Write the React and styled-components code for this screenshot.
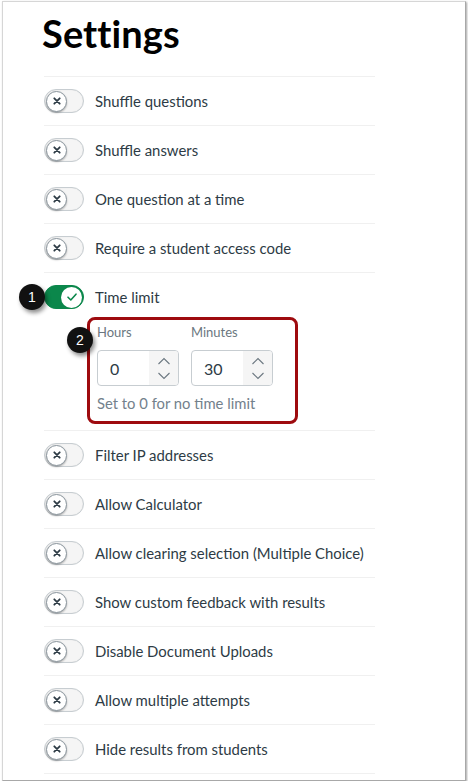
import React from 'react';
import styled, {createGlobalStyle} from 'styled-components';

const Global = createGlobalStyle`
    body{
        margin:0;
        background:#fff;
        font-family:'Lato','Liberation Sans',sans-serif;
    }
`;

const settings = [
    {label:'Shuffle questions'},
    {label:'Shuffle answers'},
    {label:'One question at a time'},
    {label:'Require a student access code'},
    {label:'Time limit', on:true, timer:true},
    {label:'Filter IP addresses'},
    {label:'Allow Calculator'},
    {label:'Allow clearing selection (Multiple Choice)'},
    {label:'Show custom feedback with results'},
    {label:'Disable Document Uploads'},
    {label:'Allow multiple attempts'},
    {label:'Hide results from students'},
];

const Toggle = ({on}) => (
    <Track on={on ? 1 : 0}>
        <Knob on={on ? 1 : 0}>
            {on ? (
                <svg width="12" height="12" viewBox="0 0 12 12">
                    <path d="M2 6.2 L4.8 9 L10 3.2" fill="none" stroke="#0b874b" strokeWidth="1.6" strokeLinecap="round" strokeLinejoin="round"/>
                </svg>
            ) : (
                <svg width="10" height="10" viewBox="0 0 10 10">
                    <path d="M2.3 2.3 L7.7 7.7 M7.7 2.3 L2.3 7.7" stroke="#2d3b45" strokeWidth="1.8" strokeLinecap="round"/>
                </svg>
            )}
        </Knob>
    </Track>
);

const Spinner = () => (
    <Arrows>
        <svg width="14" height="8" viewBox="0 0 14 8">
            <path d="M1.5 7 L7 1.5 L12.5 7" fill="none" stroke="#6b7780" strokeWidth="1.1"/>
        </svg>
        <svg width="14" height="8" viewBox="0 0 14 8">
            <path d="M1.5 1 L7 6.5 L12.5 1" fill="none" stroke="#6b7780" strokeWidth="1.1"/>
        </svg>
    </Arrows>
);

const NumberField = ({label, value}) => (
    <Field>
        <FieldLabel>{label}</FieldLabel>
        <InputBox>
            <Value>{value}</Value>
            <Spinner/>
        </InputBox>
    </Field>
);

const App = () => {
    return(
        <>
            <Global/>
            <Frame>
                <Title>Settings</Title>
                <List>
                    {settings.map((s) => (
                        <Item key={s.label} timer={s.timer ? 1 : 0}>
                            <Row>
                                {s.on && <Badge left={-25} top={11}>1</Badge>}
                                <Toggle on={s.on}/>
                                <Label>{s.label}</Label>
                            </Row>
                            {s.timer && (
                                <TimerBox>
                                    <Badge left={-23} top={7}>2</Badge>
                                    <Fields>
                                        <NumberField label="Hours" value="0"/>
                                        <NumberField label="Minutes" value="30"/>
                                    </Fields>
                                    <Hint>Set to 0 for no time limit</Hint>
                                </TimerBox>
                            )}
                        </Item>
                    ))}
                </List>
            </Frame>
        </>
    );
}

const Frame = styled.div`
    box-sizing:border-box;
    margin:1px 0 0 2px;
    width:464px;
    height:780px;
    border:1px solid #d6d6d6;
    border-right-color:#a8a8a8;
    border-bottom-color:#a8a8a8;
    box-shadow:1px 1px 2px rgba(0,0,0,0.35);
    padding:8px 0 0 38px;
    overflow:hidden;
`;

const Title = styled.h1`
    margin:0 0 0 1px;
    font-size:38px;
    line-height:46px;
    font-weight:700;
    color:#000;
    letter-spacing:0.1px;
`;

const List = styled.div`
    margin:20px 0 0 3px;
    width:331px;
    border-top:1px solid #f0f0f0;
`;

const Item = styled.div`
    position:relative;
    border-bottom:1px solid #f0f0f0;
    padding-bottom:${p => p.timer ? '6px' : '0'};
`;

const Row = styled.div`
    position:relative;
    display:flex;
    align-items:center;
    height:48px;
`;

const Track = styled.div`
    box-sizing:border-box;
    width:40px;
    height:24px;
    border-radius:12px;
    display:flex;
    align-items:center;
    justify-content:${p => p.on ? 'flex-end' : 'flex-start'};
    background:${p => p.on ? '#0b874b' : '#f5f5f5'};
    border:1px solid ${p => p.on ? '#0b874b' : '#c7cdd1'};
    box-shadow:${p => p.on ? 'none' : 'inset 0 0 1px rgba(0,0,0,0.15)'};
    padding:0 1px;
    flex-shrink:0;
`;

const Knob = styled.div`
    box-sizing:border-box;
    width:21px;
    height:21px;
    border-radius:50%;
    background:#fff;
    display:flex;
    align-items:center;
    justify-content:center;
    border:${p => p.on ? 'none' : '1px solid #8b969e'};
    box-shadow:${p => p.on ? 'none' : '0 1px 2px rgba(0,0,0,0.3)'};
`;

const Label = styled.span`
    margin-left:11px;
    font-size:14.9px;
    color:#2d3b45;
    white-space:nowrap;
`;

const Badge = styled.div`
    position:absolute;
    left:${p => p.left}px;
    top:${p => p.top}px;
    width:26px;
    height:26px;
    border-radius:50%;
    background:#111;
    color:#fff;
    font-family:'Liberation Sans',sans-serif;
    font-size:14px;
    display:flex;
    align-items:center;
    justify-content:center;
    box-shadow:2px 3px 4px rgba(0,0,0,0.45);
    z-index:2;
`;

const TimerBox = styled.div`
    position:relative;
    box-sizing:border-box;
    margin:-4px 0 0 43px;
    width:211px;
    height:107px;
    border:3px solid #9e0b0f;
    border-radius:8px;
    padding:1px 0 0 7px;
`;

const Fields = styled.div`
    display:flex;
    gap:12px;
`;

const Field = styled.div`
    display:flex;
    flex-direction:column;
`;

const FieldLabel = styled.div`
    font-size:13px;
    line-height:22px;
    color:#6b7780;
    margin-bottom:7px;
`;

const InputBox = styled.div`
    box-sizing:border-box;
    display:flex;
    width:82px;
    height:36px;
    border:1px solid #c7cdd1;
    border-radius:4px;
    overflow:hidden;
`;

const Value = styled.div`
    flex:1;
    display:flex;
    align-items:center;
    padding-left:12px;
    font-size:16px;
    color:#2d3b45;
`;

const Arrows = styled.div`
    width:29px;
    background:#f5f5f5;
    display:flex;
    flex-direction:column;
    align-items:center;
    justify-content:center;
    gap:7px;
`;

const Hint = styled.div`
    margin-top:8px;
    font-size:14.8px;
    color:#73818c;
`;

export default App;
